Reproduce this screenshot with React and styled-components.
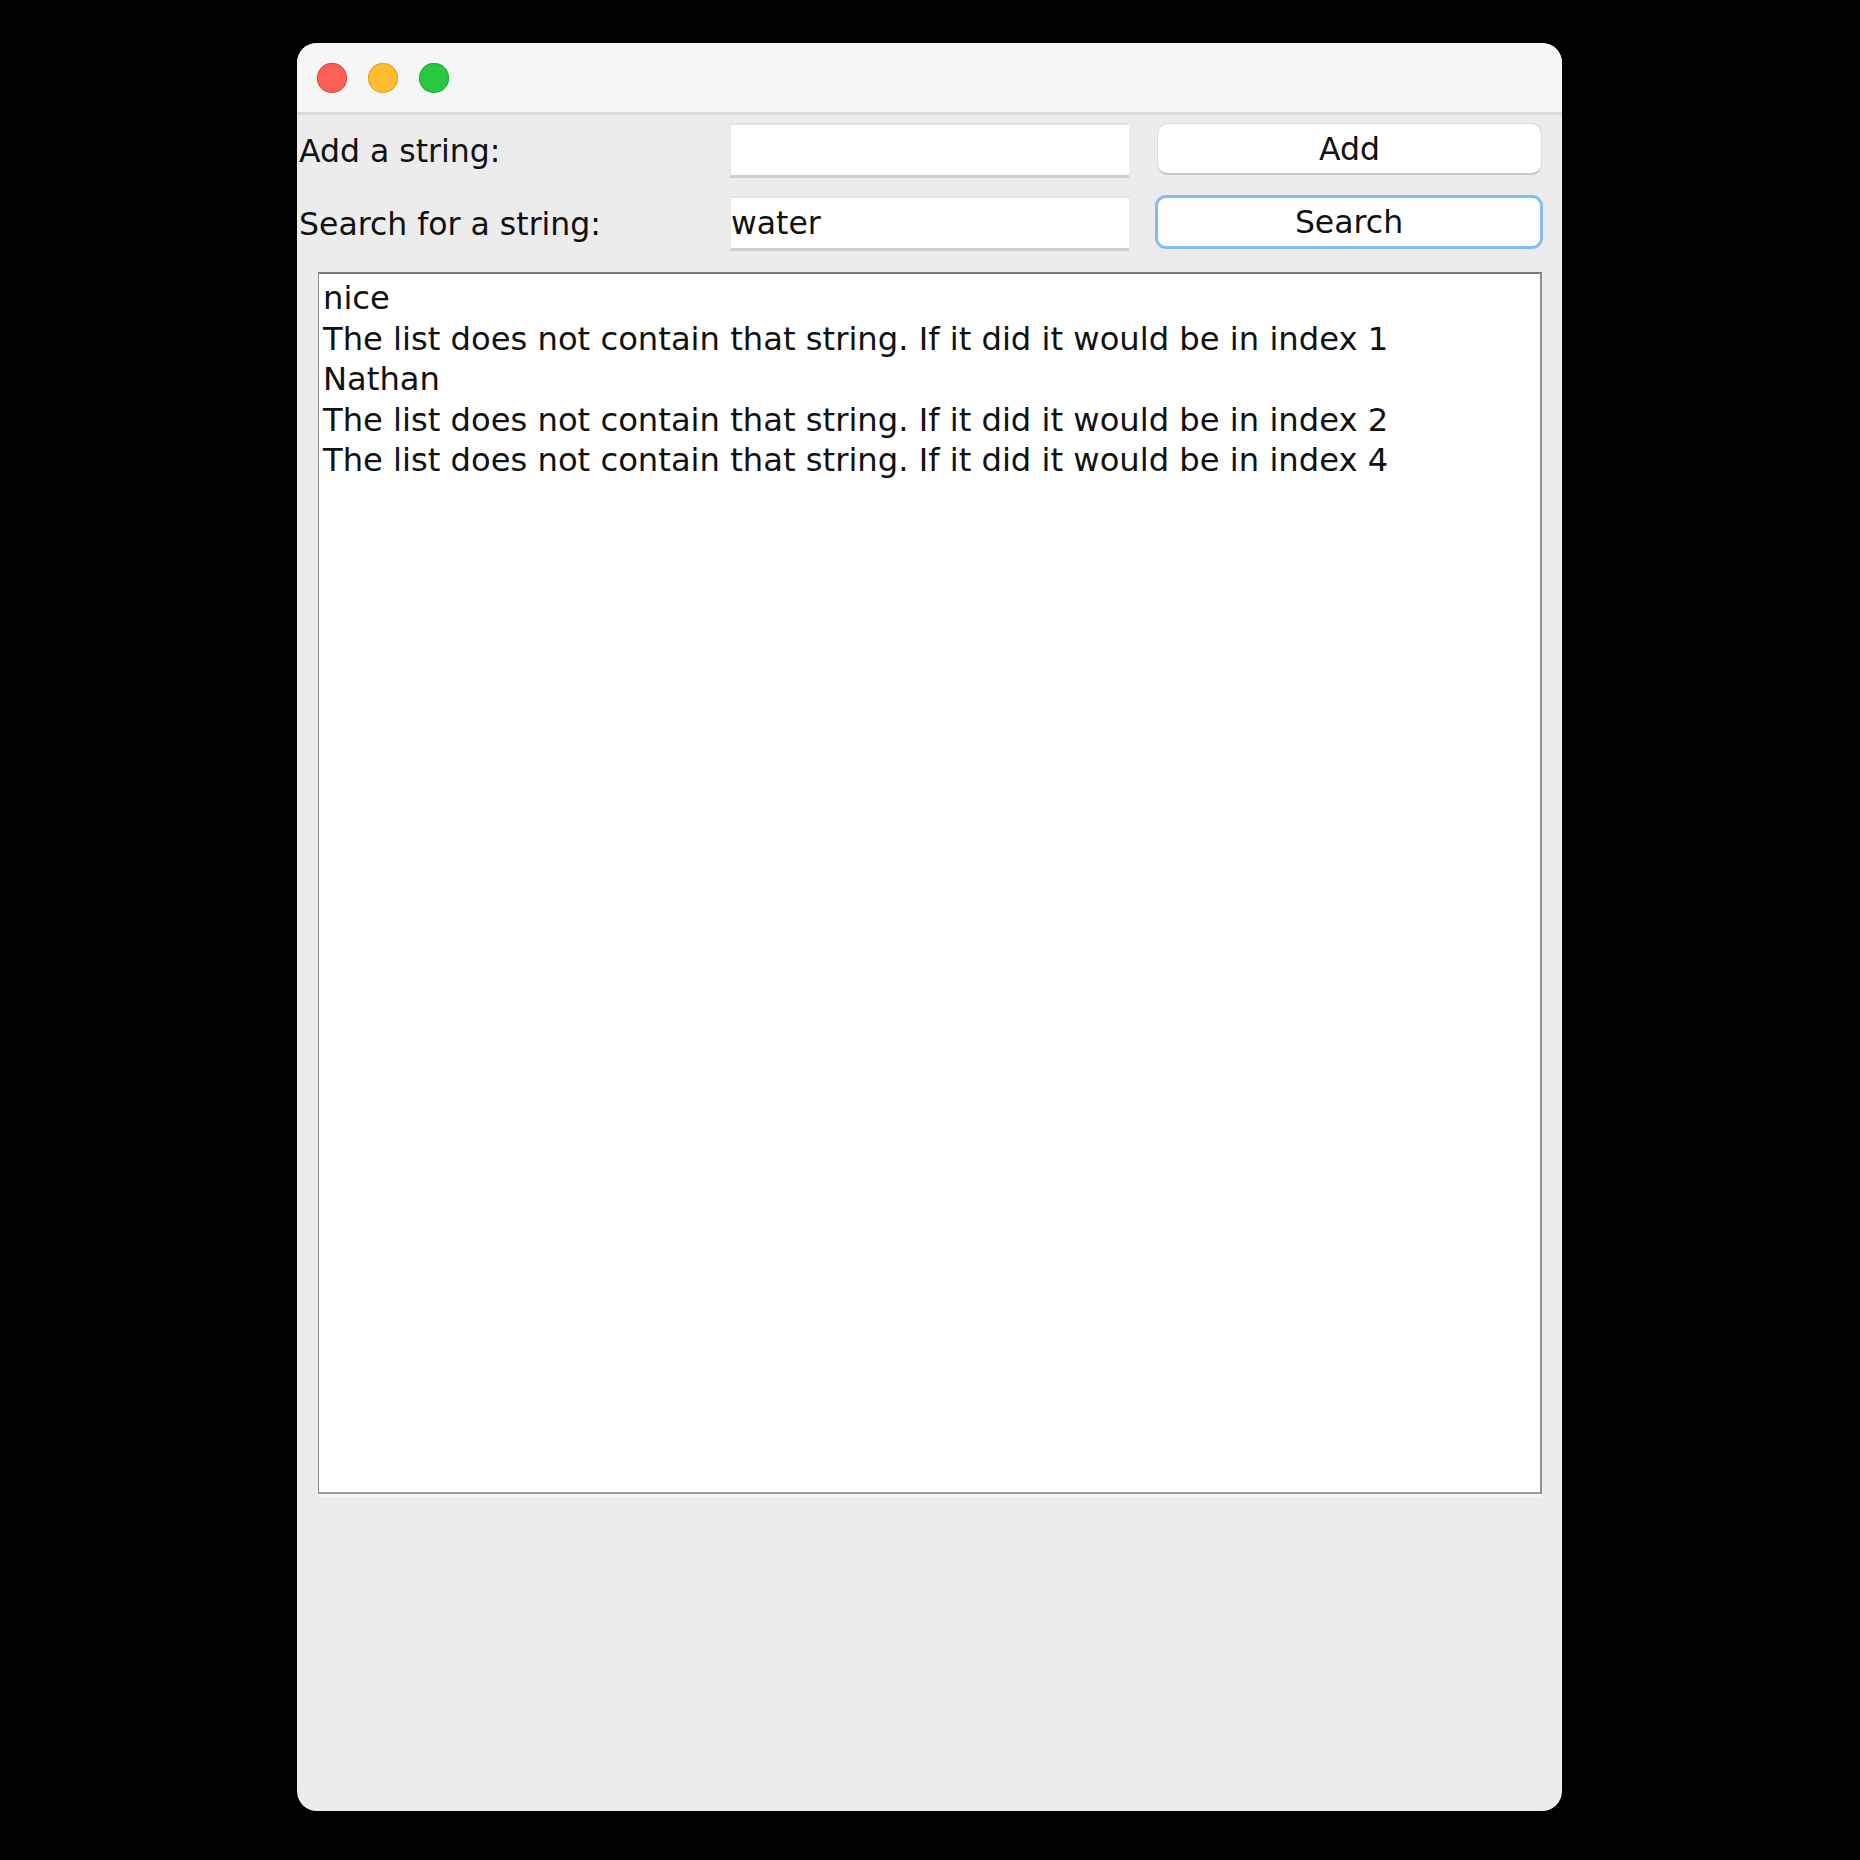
import React from 'react'
import styled, { createGlobalStyle } from 'styled-components'

const GlobalStyle = createGlobalStyle`
  html, body {
    margin: 0;
    padding: 0;
    background: #000;
  }
  body {
    font-family: "DejaVu Sans", "Liberation Sans", sans-serif;
  }
`

const Screen = styled.div`
  width: 1860px;
  height: 1860px;
  padding: 43px 0 0 297px;
  box-sizing: border-box;
  background: #000;
`

const Window = styled.div`
  width: 1265px;
  height: 1768px;
  background: #ececec;
  border-radius: 20px;
  overflow: hidden;
  display: flex;
  flex-direction: column;
`

const TitleBar = styled.div`
  height: 69px;
  background: #f6f6f6;
  border-bottom: 3px solid #dadada;
  display: flex;
  align-items: center;
  gap: 21px;
  padding-left: 20px;
  flex-shrink: 0;
`

const Light = styled.span`
  width: 30px;
  height: 30px;
  border-radius: 50%;
  background: ${(p) => p.color};
  box-shadow: inset 0 0 0 1px ${(p) => p.edge};
`

const Form = styled.div`
  display: grid;
  grid-template-columns: 402px 400px 385px;
  column-gap: 28px;
  row-gap: 18px;
  padding: 8px 0 0 2px;
  align-items: center;
`

const Label = styled.div`
  font-size: 31.5px;
  color: #111;
  white-space: nowrap;
`

const Field = styled.div`
  height: 55px;
  box-sizing: border-box;
  background: #fff;
  border-top: 2px solid #e4e4e4;
  border-left: 2px solid #e8e8e8;
  border-bottom: 3px solid #cdcdcd;
  font-size: 31.5px;
  color: #111;
  display: flex;
  align-items: center;
  padding-left: 0;
`

const Button = styled.div`
  align-self: start;
  height: ${(p) => (p.focused ? '54px' : '52px')};
  width: ${(p) => (p.focused ? '388px' : '385px')};
  margin: ${(p) => (p.focused ? '-1px 0 0 -2px' : '0')};
  box-sizing: border-box;
  background: #fff;
  border-radius: 11px;
  border: ${(p) => (p.focused ? '3px solid #86bbf5' : '1px solid #dcdcdc')};
  border-bottom: ${(p) => (p.focused ? '3px solid #86bbf5' : '2px solid #c8c8c8')};
  font-size: 31.5px;
  color: #111;
  display: flex;
  align-items: center;
  justify-content: center;
`

const Output = styled.div`
  margin: 21px 20px 0 21px;
  height: 1222px;
  box-sizing: border-box;
  background: #fff;
  border-top: 2px solid #7a7a7a;
  border-left: 1px solid #8e8e8e;
  border-right: 2px solid #8e8e8e;
  border-bottom: 2px solid #9a9a9a;
  box-shadow: 0 3px 0 #f6f6f6;
  padding: 4px 0 0 4px;
  font-size: 32.2px;
  line-height: 40.6px;
  color: #111;
`

const Line = styled.div`
  white-space: pre;
`

const lines = [
  'nice',
  'The list does not contain that string. If it did it would be in index 1',
  'Nathan',
  'The list does not contain that string. If it did it would be in index 2',
  'The list does not contain that string. If it did it would be in index 4',
]

export default function App() {
  return (
    <Screen>
      <GlobalStyle />
      <Window>
        <TitleBar>
          <Light color="#fe5f57" edge="#e24b43" />
          <Light color="#febc2e" edge="#e1a325" />
          <Light color="#28c840" edge="#1fae33" />
        </TitleBar>
        <Form>
          <Label>Add a string:</Label>
          <Field />
          <Button>Add</Button>
          <Label>Search for a string:</Label>
          <Field>water</Field>
          <Button focused>Search</Button>
        </Form>
        <Output>
          {lines.map((l, i) => (
            <Line key={i}>{l}</Line>
          ))}
        </Output>
      </Window>
    </Screen>
  )
}
